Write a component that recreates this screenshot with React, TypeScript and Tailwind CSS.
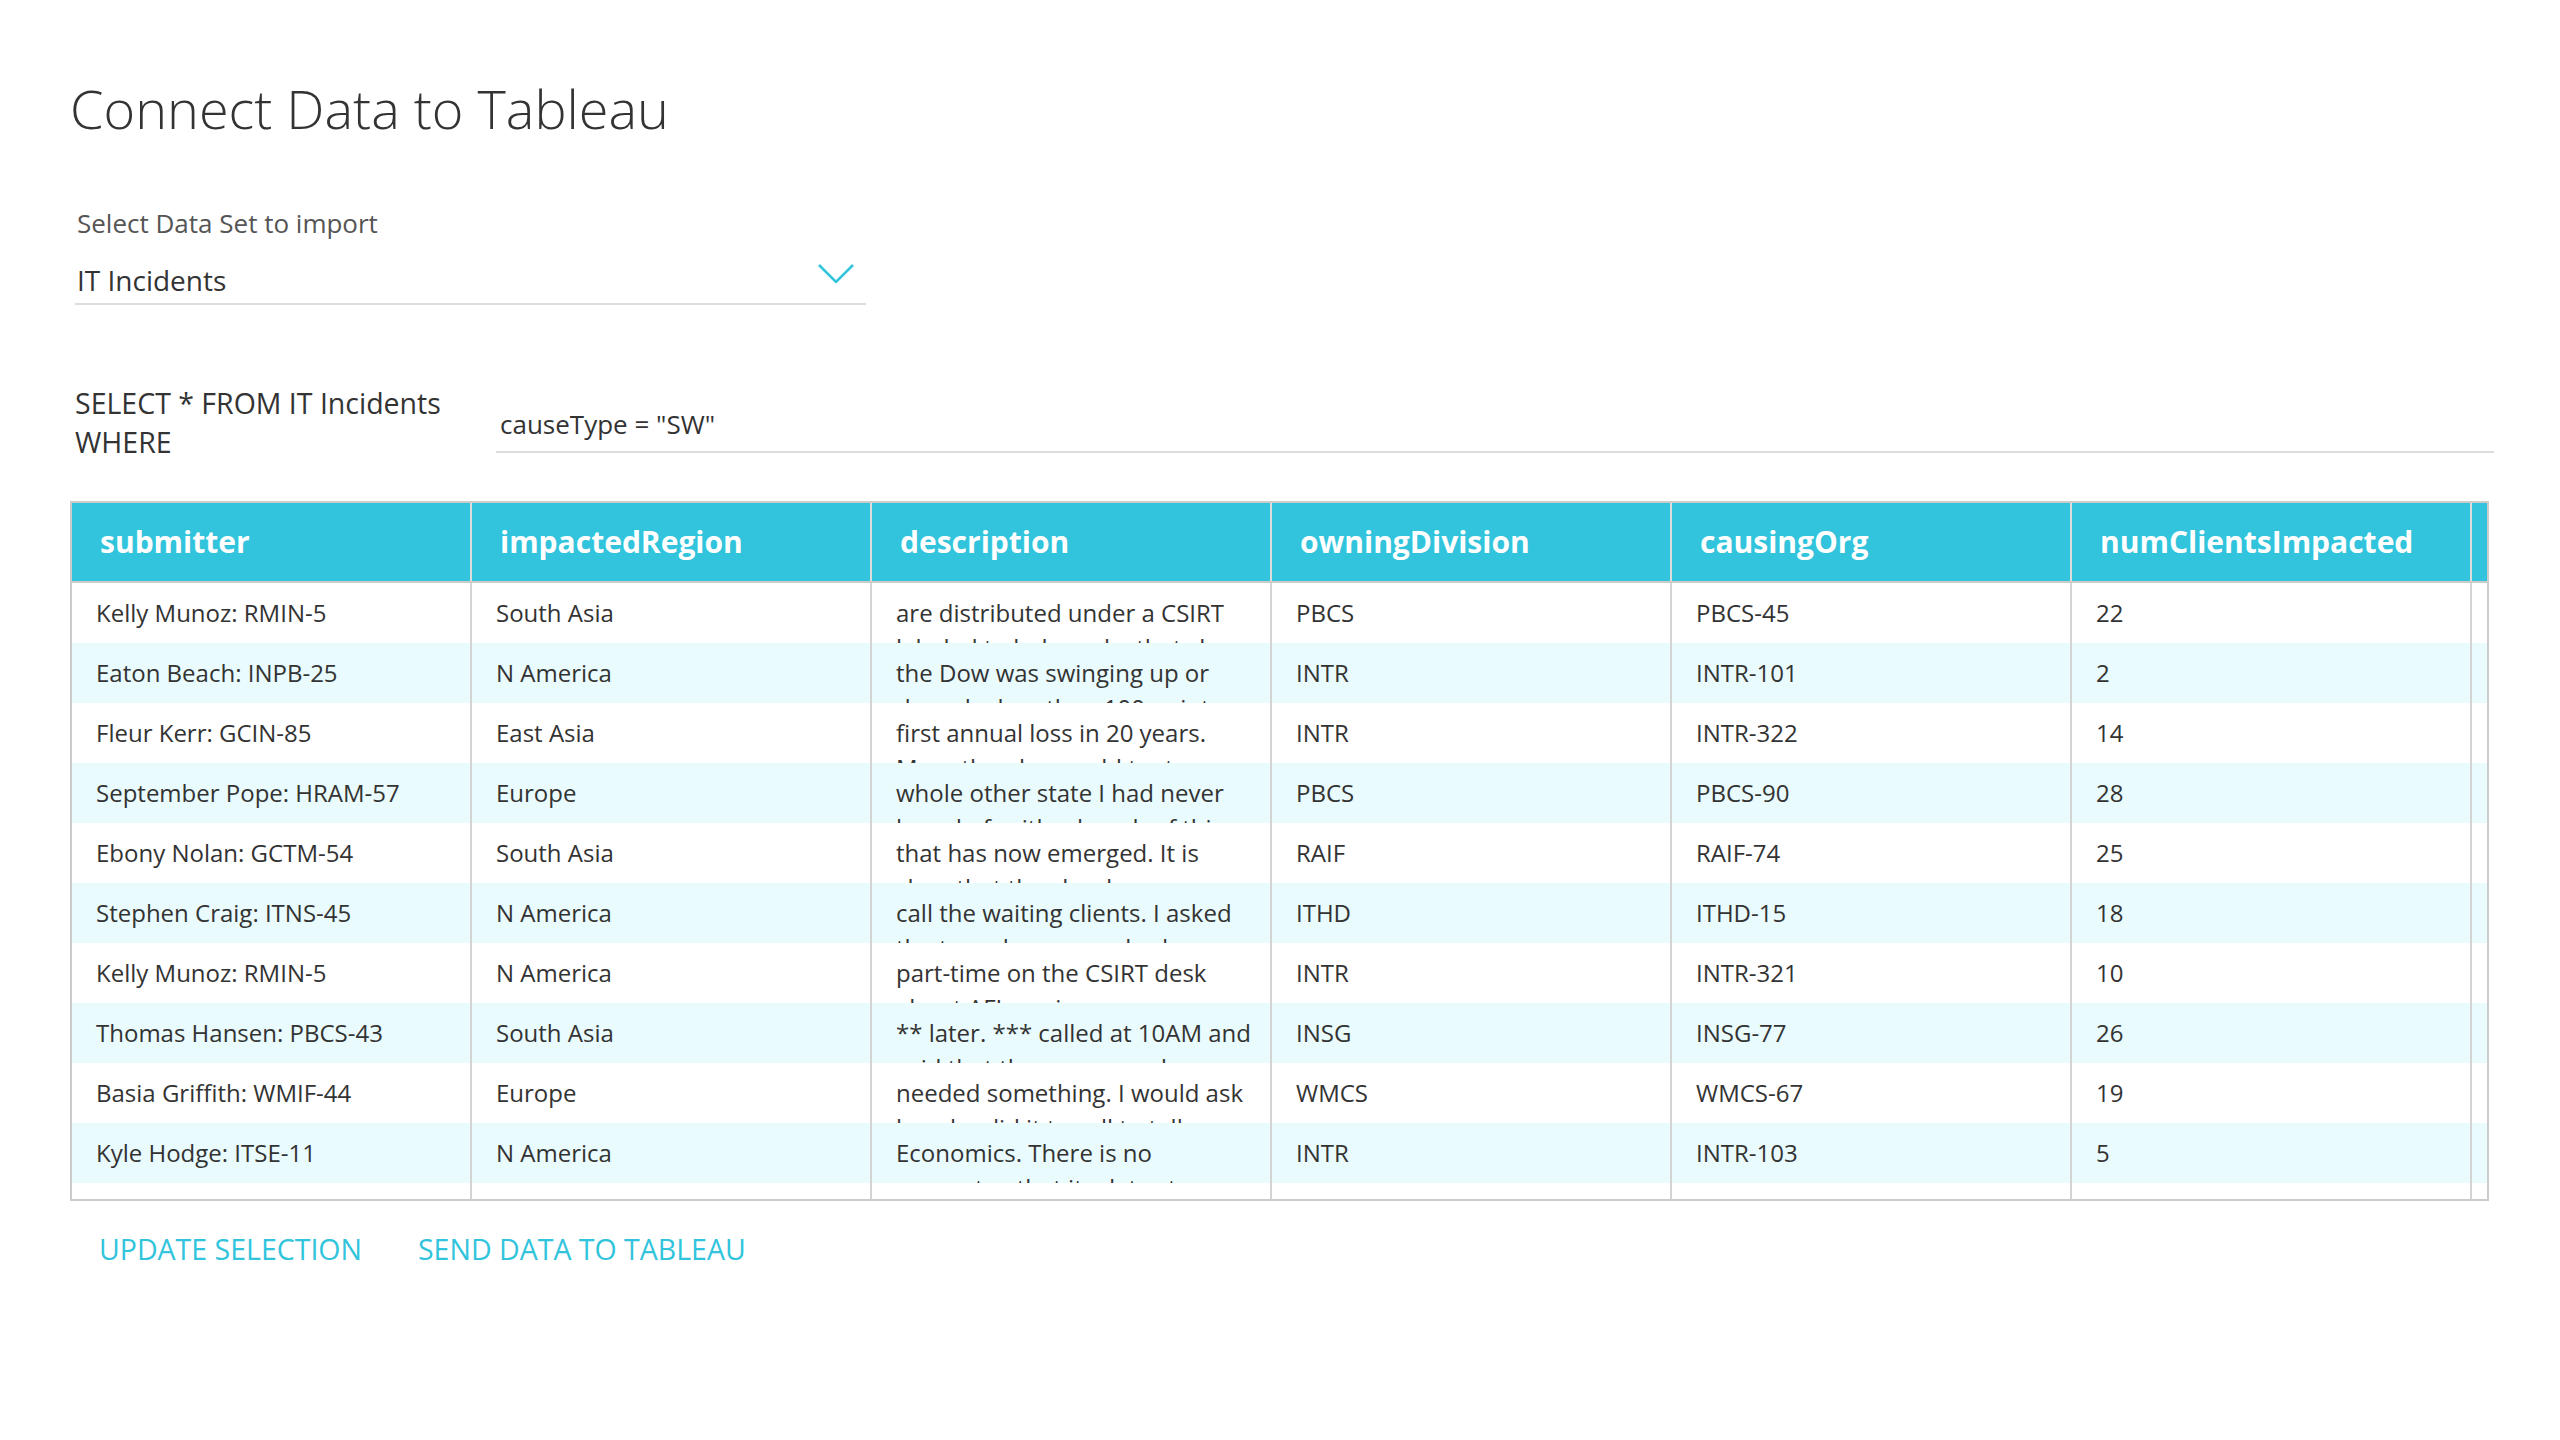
import React from 'react';

const columns = ['submitter', 'impactedRegion', 'description', 'owningDivision', 'causingOrg', 'numClientsImpacted'];

const rows: string[][] = [
    ['Kelly Munoz: RMIN-5', 'South Asia', 'are distributed under a CSIRT labeled to help make that clear', 'PBCS', 'PBCS-45', '22'],
    ['Eaton Beach: INPB-25', 'N America', 'the Dow was swinging up or down by less than 100 points', 'INTR', 'INTR-101', '2'],
    ['Fleur Kerr: GCIN-85', 'East Asia', 'first annual loss in 20 years. More than he would try to', 'INTR', 'INTR-322', '14'],
    ['September Pope: HRAM-57', 'Europe', 'whole other state I had never heard of, with a bunch of things', 'PBCS', 'PBCS-90', '28'],
    ['Ebony Nolan: GCTM-54', 'South Asia', 'that has now emerged. It is clear that the cloud', 'RAIF', 'RAIF-74', '25'],
    ['Stephen Craig: ITNS-45', 'N America', 'call the waiting clients. I asked the team how many had', 'ITHD', 'ITHD-15', '18'],
    ['Kelly Munoz: RMIN-5', 'N America', 'part-time on the CSIRT desk about AFI service', 'INTR', 'INTR-321', '10'],
    ['Thomas Hansen: PBCS-43', 'South Asia', '** later. *** called at 10AM and said that they were ready', 'INSG', 'INSG-77', '26'],
    ['Basia Griffith: WMIF-44', 'Europe', 'needed something. I would ask how he did it to call to tell', 'WMCS', 'WMCS-67', '19'],
    ['Kyle Hodge: ITSE-11', 'N America', 'Economics. There is no guarantee that its data stays', 'INTR', 'INTR-103', '5'],
    ['Dana Ortiz: HRAM-12', 'Europe', 'reported the outage around noon and asked', 'HRAM', 'HRAM-33', '7'],
];

const Chevron = () => (
    <svg width="36" height="19" viewBox="0 0 36 19" fill="none" className="mr-[12px]">
        <polyline points="1,1 18,18 35,1" stroke="#31c4dc" strokeWidth="2.5" />
    </svg>
);

export default function App() {
    return (
        <div className="min-h-screen bg-white pl-[70px] pt-[80px] font-['Open_Sans',sans-serif] text-[#333333]">
            <h1 className="text-[54px] font-light leading-[56px]">Connect Data to Tableau</h1>

            {/* data set select */}
            <div className="ml-[5px] w-[791px]">
                <label className="ml-[2px] mt-[74px] block text-[26px] leading-none text-[#555555]">Select Data Set to import</label>
                <div className="mt-[28px] flex items-start justify-between border-b-2 border-[#dddddd] pb-[9px]">
                    <span className="mt-[2px] pl-[2px] text-[28px] leading-none">IT Incidents</span>
                    <Chevron />
                </div>
            </div>

            {/* query */}
            <div className="ml-[5px] mt-[79px] flex w-[2419px] items-start">
                <p className="w-[421px] text-[28.5px] leading-[39px]">SELECT * FROM IT Incidents WHERE</p>
                <div className="mt-[27px] flex-1 border-b-2 border-[#dddddd] pb-[14px] pl-[4px] text-[26px] leading-none">causeType = "SW"</div>
            </div>

            {/* results table */}
            <div className="mt-[39px] w-[2419px] border-2 border-[#cccccc]">
                <div className="flex h-[80px] border-b-2 border-[#cccccc] bg-[#31c4dc]">
                    {columns.map((c) => (
                        <div key={c} className="flex w-[400px] items-center border-r-2 border-[#dddddd] pl-[28px] text-[30px] font-bold leading-none text-white">
                            {c}
                        </div>
                    ))}
                    <div className="flex-1" />
                </div>
                <div className="h-[616px] overflow-hidden">
                    {rows.map((r, i) => (
                        <div key={i} className={`flex h-[60px] ${i % 2 === 1 ? 'bg-[#e9fbfd]' : 'bg-white'}`}>
                            {r.map((v, j) => (
                                <div key={j} className="h-[60px] w-[400px] overflow-hidden border-r-2 border-[#d4d4d4] pl-[24px] pr-[16px] pt-[12px] text-[24px] leading-[35px]">
                                    {v}
                                </div>
                            ))}
                            <div className="flex-1" />
                        </div>
                    ))}
                </div>
            </div>

            <div className="mt-[34px] flex gap-[4px]">
                <button className="pl-[29px] pr-[26px] text-[28.5px] uppercase leading-none text-[#31c4dc]">Update Selection</button>
                <button className="px-[26px] text-[28.5px] uppercase leading-none text-[#31c4dc]">Send Data to Tableau</button>
            </div>
        </div>
    );
}
